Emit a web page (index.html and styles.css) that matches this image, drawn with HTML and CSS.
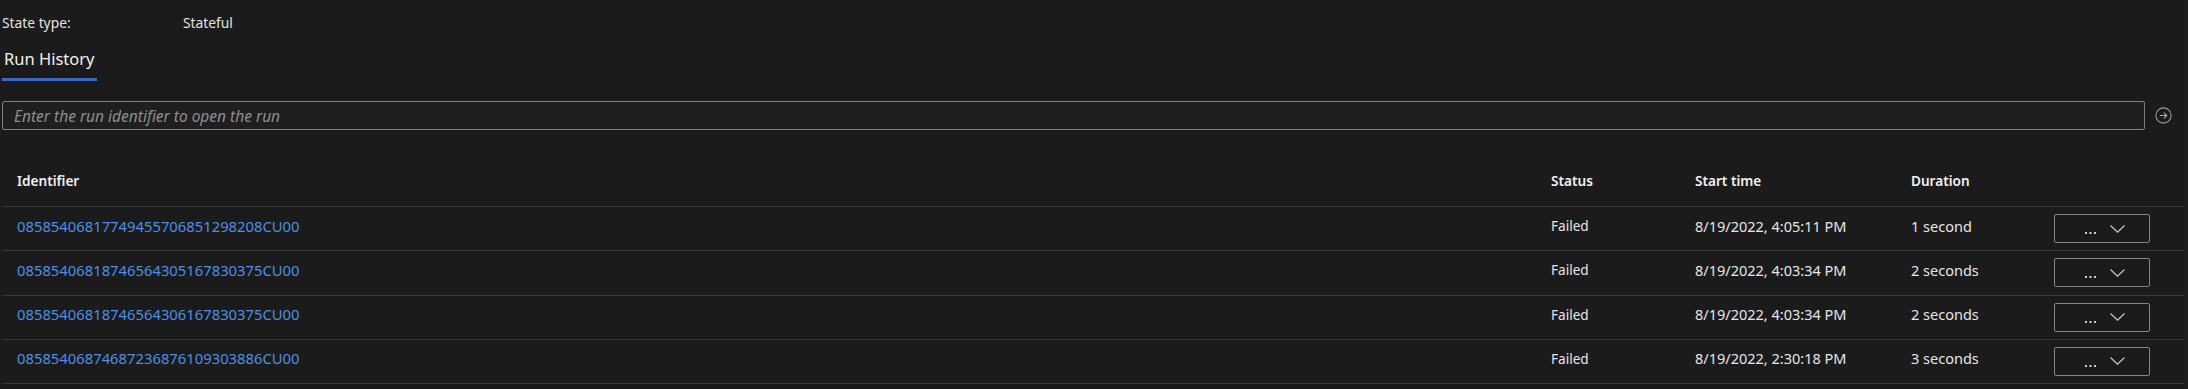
FILE: index.html
```html
<!DOCTYPE html>
<html lang="en">
<head>
    <meta charset="UTF-8">
    <title>Run History</title>
    <link rel="stylesheet" href="styles.css">
</head>
<body>
    <div class="page">
        <div class="props">
            <span class="prop-label">State type:</span>
            <span class="prop-value">Stateful</span>
        </div>

        <div class="tabs">
            <div class="tab tab-active">Run History</div>
        </div>

        <div class="search">
            <input class="search-input" type="text" placeholder="Enter the run identifier to open the run">
            <svg class="go-icon" width="17" height="17" viewBox="0 0 17 17">
                <circle cx="8.5" cy="8.5" r="7.6" fill="none" stroke="#9a9a9a" stroke-width="1.1"/>
                <path d="M4.8 8.5 H11.8 M8.9 5.6 L11.8 8.5 L8.9 11.4" fill="none" stroke="#a8a8a8" stroke-width="1.1"/>
            </svg>
        </div>

        <div class="runs">
            <div class="run-row run-head">
                <div class="cell">Identifier</div>
                <div class="cell">Status</div>
                <div class="cell">Start time</div>
                <div class="cell">Duration</div>
                <div class="cell"></div>
            </div>

            <div class="run-row">
                <div class="cell"><a class="run-link" href="#">08585406817749455706851298208CU00</a></div>
                <div class="cell cell-status">Failed</div>
                <div class="cell">8/19/2022, 4:05:11 PM</div>
                <div class="cell">1 second</div>
                <div class="cell cell-action">
                    <button class="more-btn">
                        <svg class="dots" width="11" height="3" viewBox="0 0 11 3"><rect x="0" y="0" width="2" height="2"/><rect x="4.5" y="0" width="2" height="2"/><rect x="9" y="0" width="2" height="2"/></svg>
                        <svg class="chev" width="15" height="8" viewBox="0 0 15 8"><polyline points="0.5,0.5 7.5,7.2 14.5,0.5"/></svg>
                    </button>
                </div>
            </div>

            <div class="run-row">
                <div class="cell"><a class="run-link" href="#">08585406818746564305167830375CU00</a></div>
                <div class="cell cell-status">Failed</div>
                <div class="cell">8/19/2022, 4:03:34 PM</div>
                <div class="cell">2 seconds</div>
                <div class="cell cell-action">
                    <button class="more-btn">
                        <svg class="dots" width="11" height="3" viewBox="0 0 11 3"><rect x="0" y="0" width="2" height="2"/><rect x="4.5" y="0" width="2" height="2"/><rect x="9" y="0" width="2" height="2"/></svg>
                        <svg class="chev" width="15" height="8" viewBox="0 0 15 8"><polyline points="0.5,0.5 7.5,7.2 14.5,0.5"/></svg>
                    </button>
                </div>
            </div>

            <div class="run-row">
                <div class="cell"><a class="run-link" href="#">08585406818746564306167830375CU00</a></div>
                <div class="cell cell-status">Failed</div>
                <div class="cell">8/19/2022, 4:03:34 PM</div>
                <div class="cell">2 seconds</div>
                <div class="cell cell-action">
                    <button class="more-btn">
                        <svg class="dots" width="11" height="3" viewBox="0 0 11 3"><rect x="0" y="0" width="2" height="2"/><rect x="4.5" y="0" width="2" height="2"/><rect x="9" y="0" width="2" height="2"/></svg>
                        <svg class="chev" width="15" height="8" viewBox="0 0 15 8"><polyline points="0.5,0.5 7.5,7.2 14.5,0.5"/></svg>
                    </button>
                </div>
            </div>

            <div class="run-row">
                <div class="cell"><a class="run-link" href="#">08585406874687236876109303886CU00</a></div>
                <div class="cell cell-status">Failed</div>
                <div class="cell">8/19/2022, 2:30:18 PM</div>
                <div class="cell">3 seconds</div>
                <div class="cell cell-action">
                    <button class="more-btn">
                        <svg class="dots" width="11" height="3" viewBox="0 0 11 3"><rect x="0" y="0" width="2" height="2"/><rect x="4.5" y="0" width="2" height="2"/><rect x="9" y="0" width="2" height="2"/></svg>
                        <svg class="chev" width="15" height="8" viewBox="0 0 15 8"><polyline points="0.5,0.5 7.5,7.2 14.5,0.5"/></svg>
                    </button>
                </div>
            </div>
        </div>
    </div>
</body>
</html>
```

FILE: styles.css
```css
html, body {
    margin: 0;
    padding: 0;
    background: #1f1f1f;
}
body {
    font-family: "Segoe UI", "Noto Sans", sans-serif;
    color: #e6e6e6;
    font-size: 14px;
}
.page {
    width: 2184px;
    min-height: 100vh;
    box-sizing: border-box;
    padding-left: 2px;
    background: #1b1b1b;
}

/* properties */
.props {
    display: flex;
    padding-top: 13px;
    line-height: 20px;
    color: #e2e2e2;
    font-size: 13.8px;
}
.prop-label {
    width: 181px;
}

/* tabs */
.tabs {
    display: flex;
    margin-top: 15px;
}
.tab {
    padding: 0 2px 8px 2px;
    font-size: 16.5px;
    line-height: 22px;
    color: #f0f0f0;
    border-bottom: 3px solid transparent;
}
.tab-active { border-bottom-color: #3a68c2; }

/* search */
.search {
    display: flex;
    align-items: center;
    gap: 10px;
    margin-top: 20px;
    padding-right: 12px;
}
.search-input {
    flex: 1;
    height: 29px;
    box-sizing: border-box;
    margin: 0;
    padding: 0 11px;
    border: 1px solid #7e7e7e;
    border-radius: 2px;
    background: #1f1f1f;
    color: #e6e6e6;
    font-family: "Segoe UI", "Noto Sans", sans-serif;
    font-size: 15.5px;
    outline: none;
}
.search-input::placeholder {
    color: #8e8e8e;
    font-style: italic;
}
.go-icon { display: block; }

/* run table */
.runs {
    margin-top: 24px;
}
.run-row {
    display: grid;
    grid-template-columns: 1534px 144px 216px 143px 1fr;
    align-items: center;
    height: 44.25px;
    box-sizing: border-box;
    border-bottom: 1px solid #383838;
}
.run-row .cell {
    padding-left: 15px;
    padding-bottom: 6px;
    white-space: nowrap;
    font-size: 14.5px;
}
.run-row .cell-status { font-size: 13.6px; }
.run-head {
    height: 53px;
}
.run-head .cell {
    padding-bottom: 0;
    font-weight: 600;
    font-size: 13.6px;
    color: #f2f2f2;
}
.run-row .cell-action { padding-bottom: 0; }
.run-link {
    color: #4d8fe6;
    text-decoration: none;
    font-size: 14.8px;
}

.more-btn {
    display: flex;
    align-items: center;
    justify-content: center;
    gap: 14px;
    width: 96px;
    height: 29px;
    padding: 0 0 0 6px;
    border: 1px solid #858585;
    border-radius: 2px;
    background: transparent;
    cursor: pointer;
}
.dots {
    display: block;
    fill: #cfcfcf;
    margin-top: 10px;
}
.chev {
    display: block;
    fill: none;
    stroke: #cfcfcf;
    stroke-width: 1.1;
}
```
